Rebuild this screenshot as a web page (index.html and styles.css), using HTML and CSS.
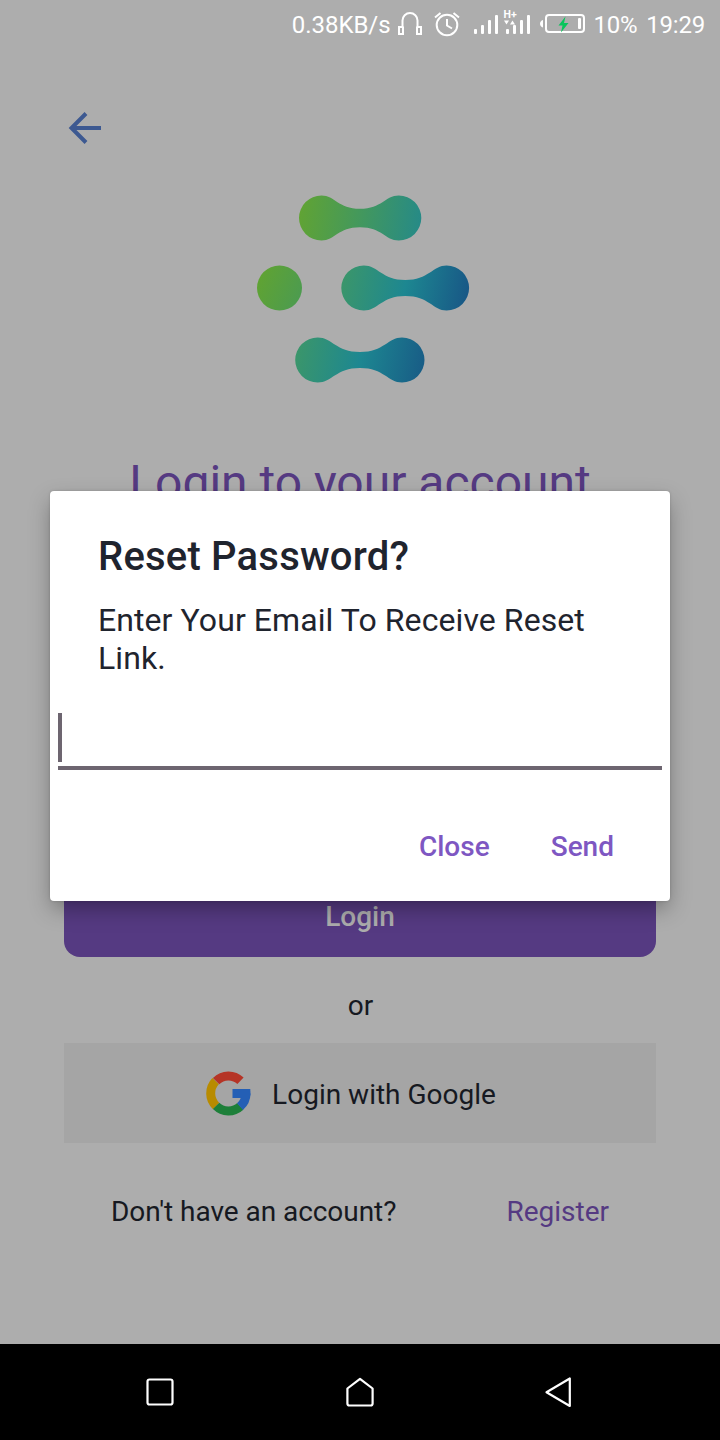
FILE: index.html
```html
<!DOCTYPE html>
<html lang="en">
<head>
<meta charset="utf-8">
<title>Reset Password</title>
<link rel="stylesheet" href="styles.css">
</head>
<body>
<div class="screen">
  <header class="status">
    <span class="speed">0.38KB/s</span>
    <svg class="status-icons" viewBox="394 0 194 50" fill="none" stroke="#fff">
      <path stroke-width="2" d="M402.500 27V20.500a7.500 7.500 0 0 1 15 0V27M402.500 27h-3.500v7h4v-7.500M417.500 27h3.500v7h-4v-7.500"/>
      <circle cx="447" cy="25" r="10.300" stroke-width="2"/>
      <path stroke-width="2" d="M447 19v6.500l5 3M435 17.500l5.500-4.500M459 17.500l-5.500-4.500"/>
      <g fill="#fff" stroke="none">
        <rect x="474" y="29" width="3" height="5" rx="1"/><rect x="481" y="25" width="3" height="9" rx="1"/><rect x="488" y="20" width="3" height="14" rx="1"/><rect x="495" y="15" width="3" height="19" rx="1"/>
        <rect x="506" y="29" width="3" height="5" rx="1"/><rect x="513" y="25" width="3" height="9" rx="1"/><rect x="520" y="20" width="3" height="14" rx="1"/><rect x="527" y="15" width="3" height="19" rx="1"/>
        <path d="M504 20.500h5l-2.500 4zM510 24.500h5l-2.500-4z"/>
        <text class="network" x="503.500" y="18">H+</text>
        <path d="M543 20v7.500c-4-1-4-6.500 0-7.500z"/>
        <rect x="578" y="18" width="3" height="11" rx="1"/>
      </g>
      <rect x="546" y="15" width="38" height="17" rx="3" stroke-width="2"/>
      <path fill="#08c55c" stroke="none" d="M565.500 16.500L558.500 25.500h4l-1.500 7 7.500-9.500h-4.500z"/>
    </svg>
    <span class="percent">10%</span>
    <span class="clock">19:29</span>
  </header>

  <main class="page">
    <svg class="back" viewBox="0 0 34 34" fill="none" stroke="#3d5991" stroke-width="4"><path d="M33 17H4M18 2.500L3.500 17L18 31.500"/></svg>
    <svg class="logo" viewBox="240 180 240 220">
      <defs>
        <linearGradient id="lime" gradientUnits="userSpaceOnUse" x1="300" y1="210" x2="421" y2="226"><stop offset="0" stop-color="#60a334"/><stop offset=".5" stop-color="#43985d"/><stop offset="1" stop-color="#268a87"/></linearGradient>
        <linearGradient id="dot" x1="0" y1=".3" x2="1" y2=".7"><stop offset="0" stop-color="#60a332"/><stop offset="1" stop-color="#4c9b50"/></linearGradient>
        <linearGradient id="teal-mid" gradientUnits="userSpaceOnUse" x1="342" y1="276" x2="468" y2="300"><stop offset="0" stop-color="#3b966a"/><stop offset=".5" stop-color="#1d8791"/><stop offset="1" stop-color="#185786"/></linearGradient>
        <linearGradient id="teal-low" gradientUnits="userSpaceOnUse" x1="296" y1="348" x2="424" y2="372"><stop offset="0" stop-color="#3b966a"/><stop offset=".5" stop-color="#1d8791"/><stop offset="1" stop-color="#185c86"/></linearGradient>
      </defs>
      <path fill="url(#lime)" d="M321.500 195.500C335 195.500 338 208.800 360 208.800S385 195.500 398.800 195.500A22.500 22.500 0 0 1 398.800 240.500C385 240.500 382 227.300 360 227.300S335 240.500 321.500 240.500A22.500 22.500 0 0 1 321.500 195.500Z"/>
      <circle cx="279.500" cy="288" r="22.500" fill="url(#dot)"/>
      <path fill="url(#teal-mid)" d="M363.800 265.500C378 265.500 382 280 405.300 280S433 265.500 446.600 265.500A22.500 22.500 0 0 1 446.600 310.500C433 310.500 429 296 405.300 296S378 310.500 363.800 310.500A22.500 22.500 0 0 1 363.800 265.500Z"/>
      <path fill="url(#teal-low)" d="M317.700 337.500C332 337.500 336 352 360 352S388 337.500 402 337.500A22.500 22.500 0 0 1 402 382.500C388 382.500 384 368 360 368S332 382.500 317.700 382.500A22.500 22.500 0 0 1 317.700 337.500Z"/>
    </svg>
    <h1 class="title">Login to your account</h1>
    <div class="login">Login</div>
    <div class="or">or</div>
    <div class="google">
      <svg class="google-icon" viewBox="0 0 45 45" fill="none" stroke-width="9">
        <path stroke="#b88b00" d="M9.600 10.100A17.500 17.500 0 0 0 10.100 34.900"/>
        <path stroke="#1d7f39" d="M10.100 34.900A17.500 17.500 0 0 0 34.300 35.400"/>
        <path stroke="#b53426" d="M10.100 10.100A17.500 17.500 0 0 1 34.500 9.800"/>
        <path stroke="#245fb5" d="M34 35.600A17.500 17.500 0 0 0 40 22.500"/>
        <path fill="#245fb5" stroke="none" d="M26.500 18H44.300Q45 23 43.700 27H26.500Z"/>
      </svg>
      <span class="google-label">Login with Google</span>
    </div>
    <div class="signup"><span class="question">Don't have an account?</span><a class="register">Register</a></div>
  </main>

  <nav class="navbar">
    <svg viewBox="0 0 34 34"><rect x="4.500" y="4.500" width="25" height="25" rx="2"/></svg>
    <svg viewBox="0 0 34 34"><path d="M17 3.800L29.600 13.500V28.500a2 2 0 0 1-2 2H6.400a2 2 0 0 1-2-2V13.500Z"/></svg>
    <svg viewBox="0 0 34 34"><path d="M26.800 3.500V31L3.500 17.300Z"/></svg>
  </nav>

  <section class="dialog">
    <h2 class="dialog-title">Reset Password?</h2>
    <p class="message">Enter Your Email To Receive Reset Link.</p>
    <div class="field"><span class="caret"></span></div>
    <div class="actions"><span class="close">Close</span><span class="send">Send</span></div>
  </section>
</div>
</body>
</html>
```
FILE: styles.css
```css
* { box-sizing: border-box; }
body { margin: 0; font-family: Roboto, sans-serif; }
h1, h2, p { margin: 0; font-weight: 400; }
svg { display: block; flex: none; }
.screen {
  position: relative;
  display: flex;
  flex-direction: column;
  width: 720px;
  height: 1440px;
  overflow: hidden;
  background: #adadad;
  color: #161921;
  font-size: 28px;
}
.status {
  display: flex;
  justify-content: flex-end;
  height: 50px;
  padding-right: 15px;
  color: #fff;
  font-size: 24px;
  line-height: 50px;
  white-space: nowrap;
}
.speed { letter-spacing: -.05px; }
.status-icons { width: 194px; height: 50px; margin-left: 3px; }
.network { font: 700 10.5px Roboto, sans-serif; }
.percent { margin-left: 6px; letter-spacing: -.3px; }
.clock { margin-left: 9px; letter-spacing: -.2px; }
.page {
  flex: 1;
  display: flex;
  flex-direction: column;
  padding: 61px 64px 0;
}
.back { width: 34px; height: 34px; margin-left: 4px; }
.logo { width: 240px; height: 220px; margin: 35px 0 0 176px; }
.title {
  height: 56px;
  margin-top: 55px;
  color: #553a82;
  font-size: 48px;
  line-height: 56px;
  text-align: center;
  white-space: nowrap;
}
.login {
  height: 80px;
  margin-top: 366px;
  border-radius: 16px;
  background: #553a82;
  color: #adadad;
  font-weight: 500;
  line-height: 80px;
  text-align: center;
}
.or { height: 86px; padding-left: 1px; line-height: 97px; text-align: center; }
.google {
  display: flex;
  align-items: center;
  justify-content: center;
  gap: 21px;
  height: 100px;
  padding-right: 18px;
  background: #a5a5a5;
}
.google-icon { width: 45px; height: 45px; }
.google-label { padding-top: 3px; line-height: 33px; }
.signup {
  display: flex;
  justify-content: space-between;
  margin-top: 52px;
  padding: 0 47px;
  line-height: 33px;
}
.question { letter-spacing: -.05px; }
.register { color: #553a82; }
.navbar {
  display: flex;
  justify-content: center;
  align-items: center;
  gap: 166px;
  height: 96px;
  background: #000;
}
.navbar svg {
  width: 34px;
  height: 34px;
  fill: none;
  stroke: #fff;
  stroke-width: 2.2;
  stroke-linejoin: round;
}
.dialog {
  position: absolute;
  top: 491px;
  left: 50px;
  width: 620px;
  height: 410px;
  padding: 42px 8px 0;
  border-radius: 4px;
  background: #fff;
  color: #1f242e;
  box-shadow: 0 9px 22px -2px rgba(0, 0, 0, .34), 0 0 3px rgba(0, 0, 0, .16);
}
.dialog-title { padding-left: 40px; font-size: 40px; font-weight: 500; line-height: 47px; letter-spacing: .2px; }
.message { padding: 21px 40px 0; font-size: 32px; line-height: 38px; letter-spacing: .08px; }
.field { height: 57px; margin-top: 36px; border-bottom: 4px solid #6d6570; }
.caret { display: block; width: 4px; height: 49px; background: #6d6570; }
.actions {
  display: flex;
  justify-content: flex-end;
  gap: 61px;
  margin-top: 60px;
  padding-right: 48px;
  color: #7e57c2;
  font-weight: 500;
  line-height: 33px;
}
```
